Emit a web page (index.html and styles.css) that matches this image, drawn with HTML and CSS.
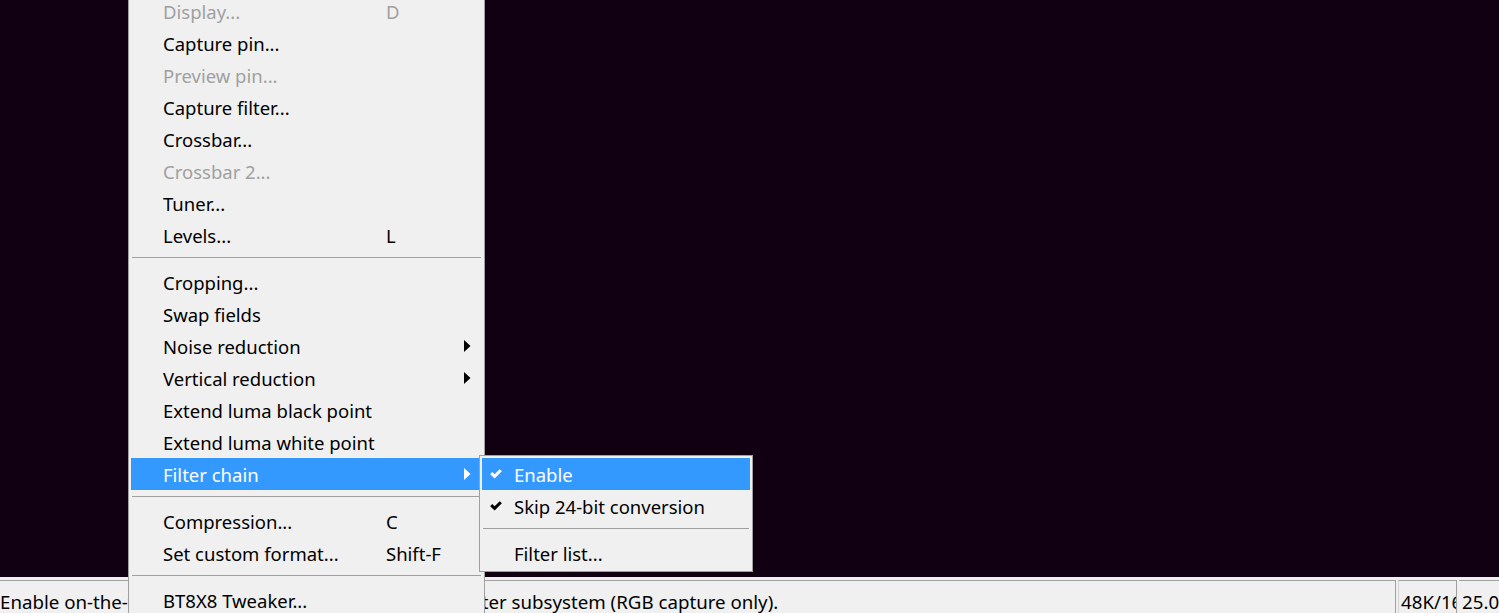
FILE: index.html
```html
<!DOCTYPE html>
<html>
<head>
<meta charset="utf-8">
<link rel="stylesheet" href="styles.css">
</head>
<body>
<div class="canvas"></div>
<div class="statusbar">
  <div class="panel panel-main">Enable on-the-fly video filtering using the VirtualDub filter subsystem (RGB capture only).</div>
  <div class="panel panel-mid">48K/16/stereo</div>
  <div class="panel panel-last">25.00 fps</div>
</div>

<div class="menu main-menu">
  <div class="item disabled"><span class="label">Display...</span><span class="key">D</span></div>
  <div class="item"><span class="label">Capture pin...</span></div>
  <div class="item disabled"><span class="label">Preview pin...</span></div>
  <div class="item"><span class="label">Capture filter...</span></div>
  <div class="item"><span class="label">Crossbar...</span></div>
  <div class="item disabled"><span class="label">Crossbar 2...</span></div>
  <div class="item"><span class="label">Tuner...</span></div>
  <div class="item"><span class="label">Levels...</span><span class="key">L</span></div>
  <div class="sep"></div>
  <div class="item"><span class="label">Cropping...</span></div>
  <div class="item"><span class="label">Swap fields</span></div>
  <div class="item"><span class="label">Noise reduction</span><span class="arrow"><svg width="7" height="12" viewBox="0 0 7 12"><polygon points="0,0 6.5,6 0,12"/></svg></span></div>
  <div class="item"><span class="label">Vertical reduction</span><span class="arrow"><svg width="7" height="12" viewBox="0 0 7 12"><polygon points="0,0 6.5,6 0,12"/></svg></span></div>
  <div class="item"><span class="label">Extend luma black point</span></div>
  <div class="item"><span class="label">Extend luma white point</span></div>
  <div class="item active"><span class="label">Filter chain</span><span class="arrow"><svg width="7" height="12" viewBox="0 0 7 12"><polygon points="0,0 6.5,6 0,12"/></svg></span></div>
  <div class="sep"></div>
  <div class="item"><span class="label">Compression...</span><span class="key">C</span></div>
  <div class="item"><span class="label">Set custom format...</span><span class="key">Shift-F</span></div>
  <div class="sep"></div>
  <div class="item"><span class="label">BT8X8 Tweaker...</span></div>
</div>

<div class="menu sub-menu">
  <div class="item active"><span class="check"><svg width="12" height="10" viewBox="0 0 12 10"><polyline points="1.2,4.2 4.6,7.4 10.8,1.2"/></svg></span><span class="label">Enable</span></div>
  <div class="item"><span class="check"><svg width="12" height="10" viewBox="0 0 12 10"><polyline points="1.2,4.2 4.6,7.4 10.8,1.2"/></svg></span><span class="label">Skip 24-bit conversion</span></div>
  <div class="sep"></div>
  <div class="item"><span class="check"></span><span class="label">Filter list...</span></div>
</div>
</body>
</html>
```

FILE: styles.css
```css
html, body {
  margin: 0;
  padding: 0;
}

body {
  width: 1499px;
  height: 613px;
  overflow: hidden;
  position: relative;
  display: flex;
  flex-direction: column;
  background: #110011;
  font-family: "Noto Sans", "Open Sans", sans-serif;
  font-size: 18.5px;
  color: #000;
}

.canvas {
  flex: 1;
  background: #110011;
}

.statusbar {
  height: 36px;
  box-sizing: border-box;
  background: #f0f0f0;
  padding-top: 3px;
  display: flex;
  gap: 2px;
  font-size: 18.7px;
}

.panel {
  border-top: 1px solid #a0a0a0;
  white-space: nowrap;
  overflow: hidden;
  line-height: 22px;
  padding-top: 10px;
  box-sizing: border-box;
}

.panel-main {
  width: 1396px;
  border-right: 1px solid #a0a0a0;
}

.panel-mid {
  width: 59px;
  border-left: 1px solid #d4d4d4;
  border-right: 1px solid #a0a0a0;
  padding-left: 2px;
}

.panel-last {
  flex: 1;
  padding-left: 3px;
}

.menu {
  position: absolute;
  box-sizing: border-box;
  background: #f0f0f0;
  border: 1px solid #a0a0a0;
  padding: 2px;
}

.main-menu {
  left: 128px;
  top: -8px;
  width: 357px;
}

.sub-menu {
  left: 479px;
  top: 455px;
  width: 274px;
  height: 117px;
}

.item {
  height: 32px;
  display: grid;
  align-items: center;
  white-space: nowrap;
}

.main-menu .item {
  grid-template-columns: 32px 223px 78px 7px;
}

.sub-menu .item {
  grid-template-columns: 32px 1fr;
}

.label {
  grid-column: 2;
}

.key {
  grid-column: 3;
}

.arrow {
  grid-column: 4;
  display: flex;
  align-items: center;
  height: 12px;
}

.arrow polygon {
  fill: #000;
}

.check {
  grid-column: 1;
  display: flex;
  align-items: center;
  padding-left: 8px;
  height: 10px;
}

.check polyline {
  fill: none;
  stroke: #000;
  stroke-width: 3;
  stroke-linejoin: miter;
}

.item.disabled {
  color: #a0a0a0;
}

.item.active {
  background: #3399ff;
  color: #fff;
}

.item.active polygon {
  fill: #fff;
}

.item.active polyline {
  stroke: #fff;
}

.sep {
  height: 15px;
  box-sizing: border-box;
  padding-top: 6px;
}

.sep::before {
  content: "";
  display: block;
  height: 1px;
  margin: 0 1px;
  background: #a0a0a0;
}
```
